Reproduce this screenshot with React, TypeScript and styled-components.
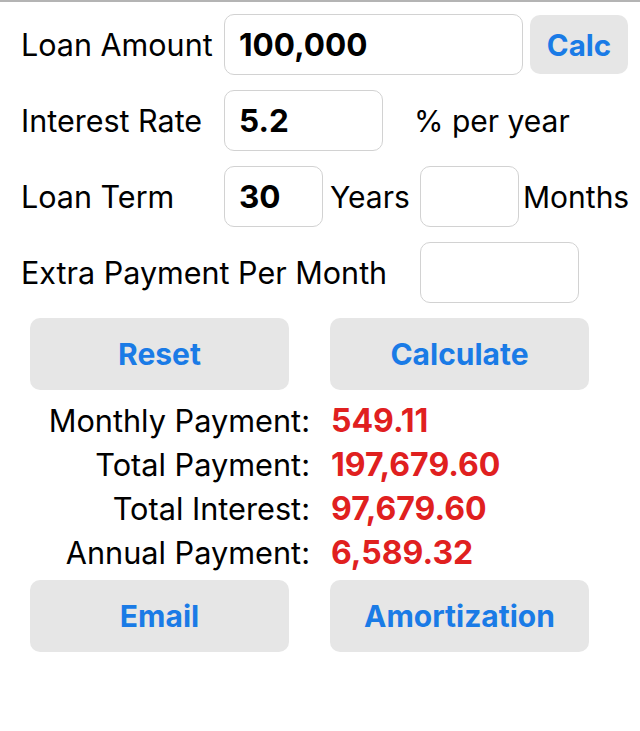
import React from 'react';
import styled, { createGlobalStyle } from 'styled-components';

const GlobalStyle = createGlobalStyle`
  html, body {
    margin: 0;
    padding: 0;
    background: #ffffff;
  }
  body {
    font-family: Inter, Roboto, "Liberation Sans", sans-serif;
    color: #000000;
  }
`;

const Page = styled.div`
  width: 640px;
  min-height: 731px;
  box-sizing: border-box;
  border-top: 2px solid #b4b4b4;
  padding-top: 12px;
  background: #ffffff;
`;

const Form = styled.div`
  display: flex;
  flex-direction: column;
  gap: 15px;
  padding-left: 21px;
`;

const Row = styled.div`
  display: flex;
  align-items: center;
  height: 61px;
`;

const Label = styled.div<{ $width: number }>`
  width: ${p => p.$width}px;
  flex: none;
  font-size: 30.5px;
  white-space: nowrap;
`;

const Field = styled.div<{ $width: number }>`
  width: ${p => p.$width}px;
  height: 61px;
  box-sizing: border-box;
  flex: none;
  border: 1px solid #d2d2d2;
  border-radius: 10px;
  display: flex;
  align-items: center;
  padding-left: 14px;
  font-size: 31.5px;
  font-weight: 700;
`;

const Unit = styled.div<{ $gap: number; $width?: number }>`
  margin-left: ${p => p.$gap}px;
  width: ${p => (p.$width ? `${p.$width}px` : 'auto')};
  flex: none;
  font-size: 30px;
  white-space: nowrap;
`;

const SmallButton = styled.div`
  margin-left: 7px;
  width: 98px;
  height: 59px;
  flex: none;
  border-radius: 10px;
  background: #e6e6e6;
  color: #1a7be6;
  font-size: 29.5px;
  font-weight: 700;
  display: flex;
  align-items: center;
  justify-content: center;
`;

const ButtonRow = styled.div<{ $top: number }>`
  display: flex;
  gap: 41px;
  padding-left: 30px;
  margin-top: ${p => p.$top}px;
`;

const ActionButton = styled.div`
  width: 259px;
  height: 72px;
  border-radius: 10px;
  background: #e6e6e6;
  color: #1a7be6;
  font-size: 30px;
  font-weight: 700;
  display: flex;
  align-items: center;
  justify-content: center;
`;

const Results = styled.div`
  display: grid;
  grid-template-columns: 310px auto;
  column-gap: 21px;
  grid-auto-rows: 44px;
  align-items: center;
  padding-top: 8px;
`;

const ResultLabel = styled.div`
  text-align: right;
  font-size: 30.7px;
  white-space: nowrap;
`;

const ResultValue = styled.div`
  color: #e0201f;
  font-size: 32px;
  font-weight: 700;
  white-space: nowrap;
`;

const results = [
  { label: 'Monthly Payment:', value: '549.11' },
  { label: 'Total Payment:', value: '197,679.60' },
  { label: 'Total Interest:', value: '97,679.60' },
  { label: 'Annual Payment:', value: '6,589.32' },
];

const App: React.FC = () => {
  return (
    <Page>
      <GlobalStyle />
      <Form>
        <Row>
          <Label $width={203}>Loan Amount</Label>
          <Field $width={299}>100,000</Field>
          <SmallButton>Calc</SmallButton>
        </Row>
        <Row>
          <Label $width={203}>Interest Rate</Label>
          <Field $width={159}>5.2</Field>
          <Unit $gap={31}>% per year</Unit>
        </Row>
        <Row>
          <Label $width={203}>Loan Term</Label>
          <Field $width={99}>30</Field>
          <Unit $gap={7} $width={90}>Years</Unit>
          <Field $width={99} />
          <Unit $gap={4}>Months</Unit>
        </Row>
        <Row>
          <Label $width={399}>Extra Payment Per Month</Label>
          <Field $width={159} />
        </Row>
      </Form>
      <ButtonRow $top={15}>
        <ActionButton>Reset</ActionButton>
        <ActionButton>Calculate</ActionButton>
      </ButtonRow>
      <Results>
        {results.map(r => (
          <React.Fragment key={r.label}>
            <ResultLabel>{r.label}</ResultLabel>
            <ResultValue>{r.value}</ResultValue>
          </React.Fragment>
        ))}
      </Results>
      <ButtonRow $top={6}>
        <ActionButton>Email</ActionButton>
        <ActionButton>Amortization</ActionButton>
      </ButtonRow>
    </Page>
  );
};

export default App;
